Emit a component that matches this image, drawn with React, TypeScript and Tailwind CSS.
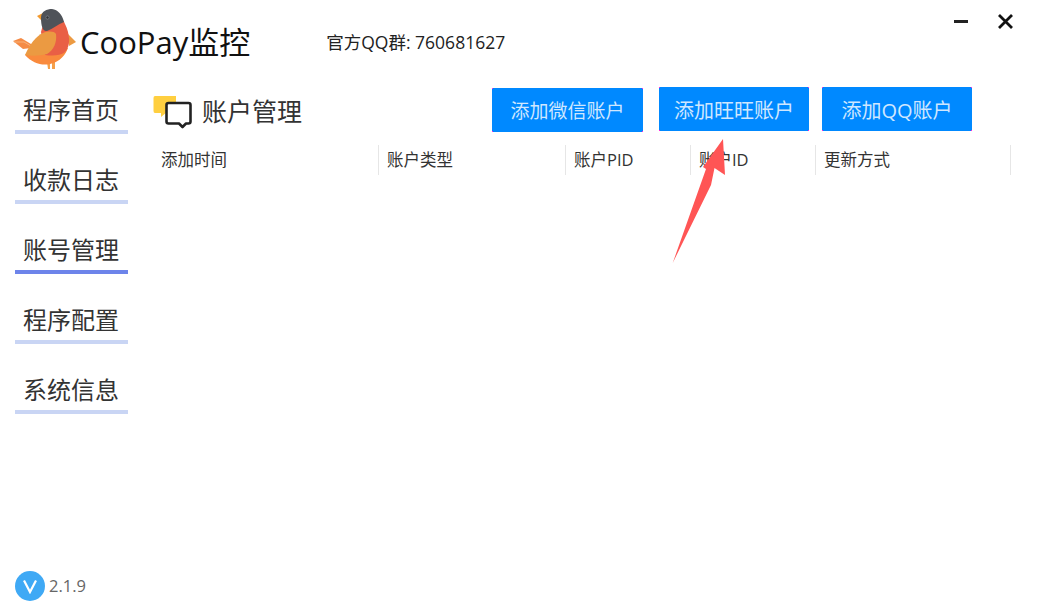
import React from 'react'

const font = '"Open Sans", "Noto Sans CJK SC", sans-serif'

const navItems = [
  { label: '程序首页', active: false },
  { label: '收款日志', active: false },
  { label: '账号管理', active: true },
  { label: '程序配置', active: false },
  { label: '系统信息', active: false },
]

const columns = [
  { label: '添加时间', width: 'w-[218px]' },
  { label: '账户类型', width: 'w-[187px]' },
  { label: '账户PID', width: 'w-[125px]' },
  { label: '账户ID', width: 'w-[125px]' },
  { label: '更新方式', width: 'w-[195px]' },
]

function Bird() {
  return (
    <svg width="80" height="72" viewBox="0 0 80 72" className="shrink-0">
      <path d="M13 41 L21 38 L31 44 L31 48 L23 49 Z" fill="#F58B45" />
      <path d="M14 42 L24 42 L31 46" stroke="#F7B27A" strokeWidth="1" fill="none" />
      <path d="M68 34 L76 42 L69 46 Z" fill="#EC9A42" />
      <path d="M47 62 L48 69 L50 69 L50 62 Z M52 62 L52 69 L55 69 L55 62 Z" fill="#F5A04A" />
      <path d="M25 55 C32 63 42 66 50 64 C60 62 66 54 68 48 L40 42 Z" fill="#F98A3D" />
      <path d="M41 32 C45 14 60 11 65 24 C70 34 71 46 65 52 C60 56 52 56 45 55 Z" fill="#E95F45" />
      <path d="M25 55 C30 44 36 36 43 33 C48 31 54 31 56 34 C57 42 54 50 47 54 C40 56 32 56 25 55 Z" fill="#EB9A42" />
      <path d="M37 16 L43 13 L43 22 Z" fill="#F39A2E" />
      <path d="M41 18 C41 11 47 9 52 9 C58 10 62 14 64 22 C58 24 53 29 47 31 C43 32 41 26 41 18 Z" fill="#4F5359" />
      <circle cx="47.5" cy="17.5" r="1.6" fill="#2E3136" stroke="#8A8D91" strokeWidth="0.6" />
    </svg>
  )
}

function ChatIcon() {
  return (
    <svg width="40" height="36" viewBox="0 0 40 36" className="shrink-0">
      <path d="M2 1 H23 V7 H14 V17 L8 22 V18 H2 Q0.500 18 0.500 16 V3 Q0.500 1 2 1 Z" fill="#FFCF40" />
      <path d="M15.500 8 H35.500 C36.800 8 37.500 8.700 37.500 10 V26.500 C37.500 27.800 36.800 28.500 35.500 28.500 H33 L29.500 32 L26 28.500 H15.500 C14.200 28.500 13.500 27.800 13.500 26.500 V10 C13.500 8.700 14.200 8 15.500 8 Z" fill="#fff" stroke="#222" strokeWidth="2.600" strokeLinejoin="round" />
    </svg>
  )
}

function ActionButton({ label, className }: { label: string; className: string }) {
  return (
    <button className={`relative h-[44px] bg-[#0089ff] text-[#cfe7ff] ${className}`}>
      {label}
      <span className="absolute left-0 top-0 w-px h-px bg-[#ff22dd]" />
      <span className="absolute right-0 top-0 w-px h-px bg-[#ff22dd]" />
      <span className="absolute left-0 bottom-0 w-px h-px bg-[#ff22dd]" />
      <span className="absolute right-0 bottom-0 w-px h-px bg-[#ff22dd]" />
    </button>
  )
}

export default function App() {
  return (
    <div className="relative w-[1044px] h-[610px] overflow-hidden bg-white flex flex-col text-[#222]" style={{ fontFamily: font }}>
      <header className="h-[75px] flex items-start shrink-0">
        <Bird />
        <span className="text-[31px] leading-[40px] text-[#111] mt-[22px]">CooPay监控</span>
        <span className="text-[17.5px] leading-[22px] text-[#222] ml-[76px] mt-[31px]">官方QQ群: 760681627</span>
        <div className="ml-auto mr-[30px] mt-[13px] flex items-center gap-[29px]">
          <div className="w-[14px] h-[3px] bg-[#222]" />
          <svg width="17" height="17" viewBox="0 0 17 17">
            <path d="M2 2 L15 15 M15 2 L2 15" stroke="#111" strokeWidth="2.800" />
          </svg>
        </div>
      </header>

      <div className="flex flex-1 min-h-0">
        <aside className="w-[153px] shrink-0 pl-[15px] flex flex-col">
          <nav className="flex flex-col gap-[25px] pt-[14px]">
            {navItems.map(item => (
              <div key={item.label} className="w-[113px]">
                <div className="h-[41px] pl-[8px] text-[24px] leading-[41px] text-[#333]">{item.label}</div>
                <div className={`h-[4px] ${item.active ? 'bg-[#6d84ea]' : 'bg-[#c9d5f4]'}`} />
              </div>
            ))}
          </nav>
          <div className="mt-auto mb-[9px] flex items-center gap-[4px]">
            <div className="w-[30px] h-[30px] rounded-full bg-[#3fa9f5] flex items-center justify-center">
              <svg width="16" height="15" viewBox="0 0 16 15">
                <path d="M2 1.500 L8 13 L14 1.500" stroke="#fff" strokeWidth="2.200" fill="none" />
              </svg>
            </div>
            <span className="text-[16.5px] text-[#666]">2.1.9</span>
          </div>
        </aside>

        <main className="flex-1 min-w-0">
          <div className="flex items-start h-[70px]">
            <div className="mt-[20px] flex items-start gap-[9px]">
              <ChatIcon />
              <h1 className="text-[25px] leading-[32px] text-[#333] font-normal">账户管理</h1>
            </div>
            <div className="ml-[190px] mt-[12px] flex items-start">
              <ActionButton label="添加微信账户" className="w-[151px] mt-[1px] pt-[2px] text-[19px]" />
              <ActionButton label="添加旺旺账户" className="w-[150px] ml-[16px] pt-[4px] text-[20px]" />
              <ActionButton label="添加QQ账户" className="w-[150px] ml-[13px] pt-[4px] text-[20px]" />
            </div>
          </div>
          <div className="flex h-[30px] ml-[8px]">
            {columns.map(c => (
              <div key={c.label} className={`${c.width} border-r border-[#e6e6e6] text-[16.500px] leading-[30px] text-[#333]`}>
                <span className={c.label === '添加时间' ? '' : 'pl-[8px]'}>{c.label}</span>
              </div>
            ))}
          </div>
        </main>
      </div>

      <svg className="absolute left-[665px] top-[135px]" width="70" height="135" viewBox="0 0 70 135">
        <path d="M7.700 128 L41 34 L38 32 L58 4 L60 40 L49.500 33 L46 50 Z" fill="#FF5555" />
      </svg>
    </div>
  )
}
